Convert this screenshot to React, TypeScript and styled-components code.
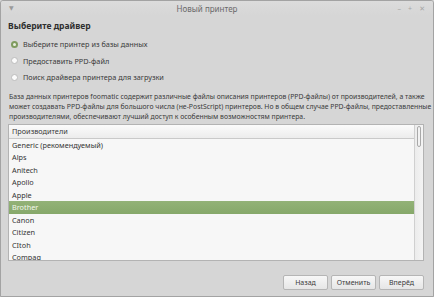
import styled, { createGlobalStyle } from "styled-components";

const Global = createGlobalStyle`
  html, body {
    margin: 0;
    padding: 0;
    background: #d6d6d6;
  }
  body {
    font-family: "Noto Sans", "DejaVu Sans", sans-serif;
    color: #333;
  }
`;

const Window = styled.div`
  width: 434px;
  height: 297px;
  box-sizing: border-box;
  border: 1px solid #a3a3a3;
  border-radius: 3px 3px 0 0;
  background: #d6d6d6;
  display: flex;
  flex-direction: column;
  overflow: hidden;
`;

const TitleBar = styled.div`
  height: 14px;
  display: flex;
  align-items: center;
  padding: 0 8px;
  background: linear-gradient(#dcdcdc, #d6d6d6);
  color: #6a6a6a;
  font-size: 8px;
`;

const MenuArrow = styled.span`
  width: 20px;
  font-size: 6px;
  color: #9a9a9a;
`;

const Title = styled.div`
  flex: 1;
  text-align: center;
`;

const Controls = styled.div`
  width: 40px;
  display: flex;
  justify-content: flex-end;
  gap: 7px;
  color: #a6a6a6;
  font-size: 7px;
`;

const Body = styled.div`
  flex: 1;
  display: flex;
  flex-direction: column;
  padding: 0 8px 0 7px;
`;

const Heading = styled.div`
  font-weight: bold;
  font-size: 8.5px;
  color: #2e2e2e;
  margin-top: 5px;
  line-height: 12px;
`;

const Options = styled.div`
  display: flex;
  flex-direction: column;
  margin-top: 4px;
`;

const Option = styled.label`
  display: flex;
  align-items: center;
  gap: 5px;
  height: 16.5px;
  font-size: 7.3px;
  color: #3a3a3a;
  padding-left: 3px;
`;

const Radio = styled.span<{ $on?: boolean }>`
  width: 7px;
  height: 7px;
  box-sizing: border-box;
  border-radius: 50%;
  border: ${(p) => (p.$on ? "2px solid #7f9b5f" : "1px solid #bdbdbd")};
  background: ${(p) => (p.$on ? "#e9eedf" : "#fbfbfb")};
`;

const Description = styled.p`
  margin: 6px 0 0 1px;
  font-size: 6.85px;
  line-height: 10px;
  color: #3a3a3a;
  white-space: nowrap;
`;

const ListBox = styled.div`
  margin-top: 2px;
  height: 137px;
  box-sizing: border-box;
  border: 1px solid #b3b3b3;
  background: #f7f7f7;
  display: flex;
  margin-right: 1px;
`;

const ListMain = styled.div`
  flex: 1;
  display: flex;
  flex-direction: column;
  overflow: hidden;
`;

const Header = styled.div`
  height: 14px;
  flex: none;
  box-sizing: border-box;
  display: flex;
  align-items: center;
  padding-left: 3px;
  font-size: 7.3px;
  color: #3a3a3a;
  background: linear-gradient(#fbfbfb, #ececec);
  border-bottom: 1px solid #c9c9c9;
`;

const Row = styled.div<{ $selected?: boolean }>`
  height: 12.5px;
  flex: none;
  display: flex;
  align-items: center;
  padding-left: 3px;
  font-size: 7.3px;
  color: ${(p) => (p.$selected ? "#f4f8ee" : "#333")};
  background: ${(p) => (p.$selected ? "linear-gradient(#93b277, #86a86a)" : "transparent")};
`;

const ScrollTrack = styled.div`
  width: 9px;
  flex: none;
  box-sizing: border-box;
  border-left: 1px solid #d0d0d0;
  background: linear-gradient(90deg, #ececec, #f4f4f4);
  padding: 1px 2px 0 2px;
`;

const Thumb = styled.div`
  height: 21px;
  box-sizing: border-box;
  border: 1px solid #a9a9a9;
  border-radius: 3px;
  background: #f2f2f2;
`;

const Footer = styled.div`
  display: flex;
  justify-content: flex-end;
  gap: 3px;
  margin-top: 14px;
  padding-right: 1px;
`;

const Button = styled.button`
  width: 45px;
  height: 15px;
  box-sizing: border-box;
  border: 1px solid #b5b5b5;
  border-radius: 2px;
  background: linear-gradient(#f7f7f7, #e6e6e6);
  font-family: "Noto Sans", "DejaVu Sans", sans-serif;
  font-size: 7px;
  color: #3a3a3a;
  padding: 0;
`;

const makers = [
  "Generic (рекомендуемый)",
  "Alps",
  "Anitech",
  "Apollo",
  "Apple",
  "Brother",
  "Canon",
  "Citizen",
  "CItoh",
  "Compaq",
];

export default function App() {
  return (
    <>
      <Global />
      <Window>
        <TitleBar>
          <MenuArrow>▼</MenuArrow>
          <Title>Новый принтер</Title>
          <Controls>
            <span>–</span>
            <span>+</span>
            <span>✕</span>
          </Controls>
        </TitleBar>
        <Body>
          <Heading>Выберите драйвер</Heading>
          <Options>
            <Option>
              <Radio $on />
              Выберите принтер из базы данных
            </Option>
            <Option>
              <Radio />
              Предоставить PPD-файл
            </Option>
            <Option>
              <Radio />
              Поиск драйвера принтера для загрузки
            </Option>
          </Options>
          <Description>
            База данных принтеров foomatic содержит различные файлы описания принтеров (PPD-файлы) от
            производителей, а также
            <br />
            может создавать PPD-файлы для большого числа (не-PostScript) принтеров. Но в общем случае
            PPD-файлы, предоставленные
            <br />
            производителями, обеспечивают лучший доступ к особенным возможностям принтера.
          </Description>
          <ListBox>
            <ListMain>
              <Header>Производители</Header>
              {makers.map((m) => (
                <Row key={m} $selected={m === "Brother"}>
                  {m}
                </Row>
              ))}
            </ListMain>
            <ScrollTrack>
              <Thumb />
            </ScrollTrack>
          </ListBox>
          <Footer>
            <Button>Назад</Button>
            <Button>Отменить</Button>
            <Button>Вперёд</Button>
          </Footer>
        </Body>
      </Window>
    </>
  );
}
